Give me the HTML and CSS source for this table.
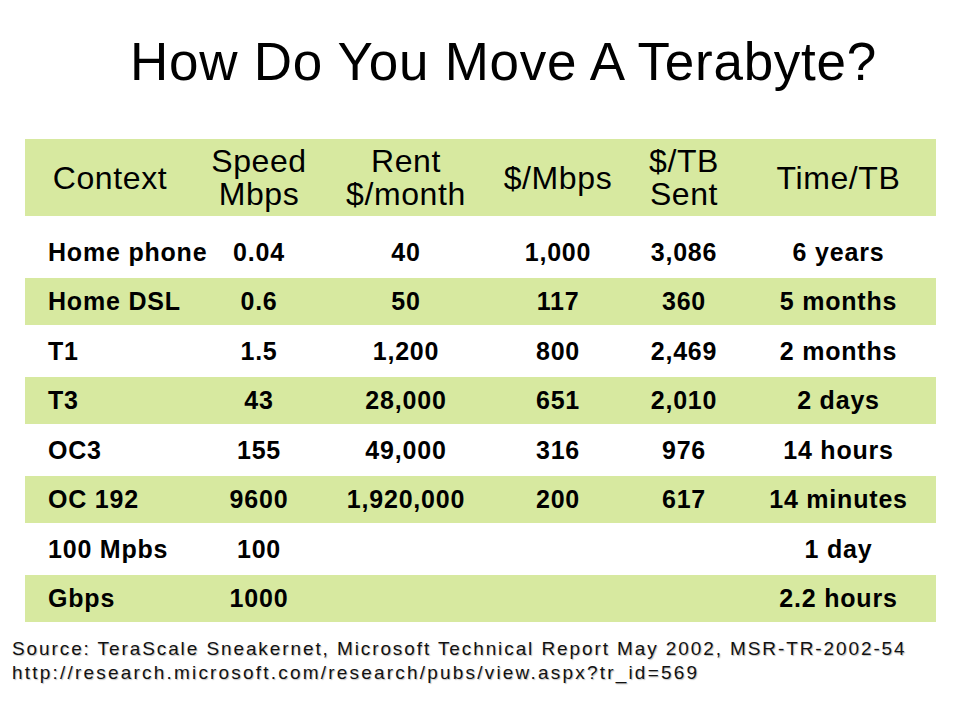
FILE: index.html
```html
<!DOCTYPE html>
<html lang="en">
<head>
<meta charset="utf-8">
<title>How Do You Move A Terabyte?</title>
<link rel="stylesheet" href="styles.css">
</head>
<body>
<div class="slide">
  <h1 class="title">How Do You Move A Terabyte?</h1>
  <div class="table">
    <div class="row head">
      <div class="cell">Context</div>
      <div class="cell">Speed<br>Mbps</div>
      <div class="cell">Rent<br>$/month</div>
      <div class="cell">$/Mbps</div>
      <div class="cell">$/TB<br>Sent</div>
      <div class="cell">Time/TB</div>
    </div>
    <div class="row plain">
      <div class="cell first">Home phone</div><div class="cell">0.04</div><div class="cell">40</div><div class="cell">1,000</div><div class="cell">3,086</div><div class="cell">6 years</div>
    </div>
    <div class="row shade">
      <div class="cell first">Home DSL</div><div class="cell">0.6</div><div class="cell">50</div><div class="cell">117</div><div class="cell">360</div><div class="cell">5 months</div>
    </div>
    <div class="row plain">
      <div class="cell first">T1</div><div class="cell">1.5</div><div class="cell">1,200</div><div class="cell">800</div><div class="cell">2,469</div><div class="cell">2 months</div>
    </div>
    <div class="row shade">
      <div class="cell first">T3</div><div class="cell">43</div><div class="cell">28,000</div><div class="cell">651</div><div class="cell">2,010</div><div class="cell">2 days</div>
    </div>
    <div class="row plain">
      <div class="cell first">OC3</div><div class="cell">155</div><div class="cell">49,000</div><div class="cell">316</div><div class="cell">976</div><div class="cell">14 hours</div>
    </div>
    <div class="row shade">
      <div class="cell first">OC 192</div><div class="cell">9600</div><div class="cell">1,920,000</div><div class="cell">200</div><div class="cell">617</div><div class="cell">14 minutes</div>
    </div>
    <div class="row plain">
      <div class="cell first">100 Mpbs</div><div class="cell">100</div><div class="cell"></div><div class="cell"></div><div class="cell"></div><div class="cell">1 day</div>
    </div>
    <div class="row shade">
      <div class="cell first">Gbps</div><div class="cell">1000</div><div class="cell"></div><div class="cell"></div><div class="cell"></div><div class="cell">2.2 hours</div>
    </div>
  </div>
  <p class="source"><span class="ref">Source: TeraScale Sneakernet, Microsoft Technical Report May 2002, MSR-TR-2002-54</span><br><span class="url">http://research.microsoft.com/research/pubs/view.aspx?tr_id=569</span></p>
</div>
</body>
</html>
```
FILE: styles.css
```css
html, body {
  margin: 0;
  padding: 0;
  background: #ffffff;
}

.slide {
  width: 960px;
  height: 720px;
  font-family: "Liberation Sans", Arial, sans-serif;
  color: #000;
  padding-top: 35px;
  box-sizing: border-box;
}

.title {
  margin: 0 0 51px 130px;
  font-size: 53px;
  line-height: 53px;
  font-weight: normal;
  letter-spacing: 0.75px;
}

.table {
  margin-left: 25px;
  width: 911px;
  display: flex;
  flex-direction: column;
}

.row {
  display: grid;
  grid-template-columns: 170px 128px 166px 138px 114px 195px;
  align-items: center;
}

.head {
  background: #d7e9a0;
  height: 77px;
  font-size: 32px;
  line-height: 33px;
  letter-spacing: 0.6px;
  margin-bottom: 10px;
}

.head .cell {
  text-align: center;
  padding-top: 1px;
}

.plain, .shade {
  font-size: 25px;
  font-weight: bold;
  letter-spacing: 0.8px;
}

.plain {
  height: 52px;
}

.shade {
  height: 47px;
  background: #d7e9a0;
}

.plain .cell, .shade .cell {
  text-align: center;
}

.plain .first, .shade .first {
  text-align: left;
  padding-left: 23px;
  white-space: nowrap;
}

.source {
  margin: 15px 0 0 12px;
  font-size: 19px;
  line-height: 24px;
  color: #111;
  text-shadow: 1px 1px 1px rgba(0, 0, 0, 0.25);
}

.ref {
  letter-spacing: 1.9px;
}

.url {
  letter-spacing: 2.2px;
}
```
